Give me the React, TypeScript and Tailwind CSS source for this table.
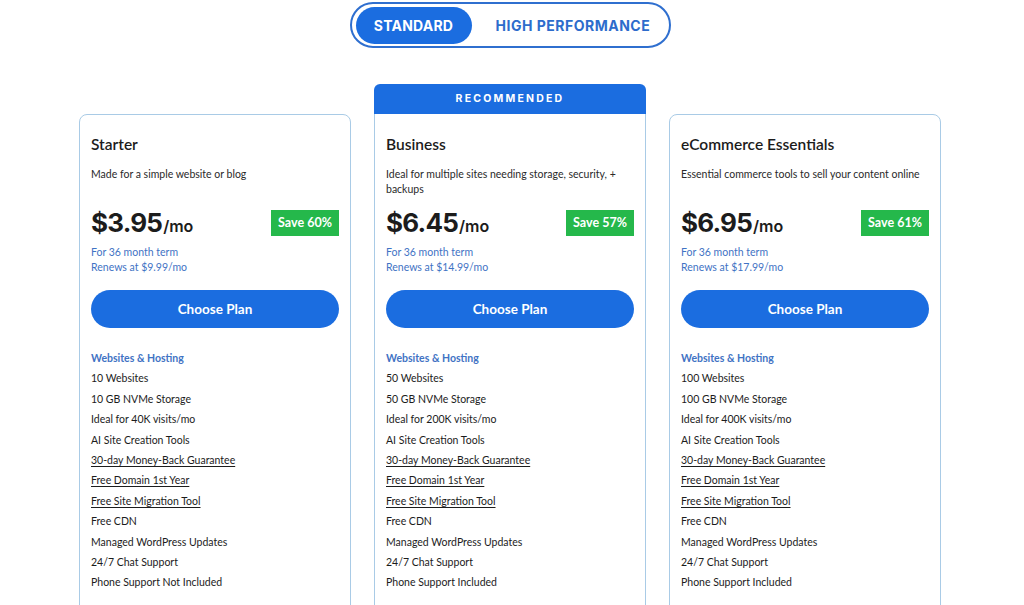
import React from 'react';

type Plan = {
  name: string;
  blurb: string;
  price: string;
  save: string;
  renews: string;
  recommended?: boolean;
  features: { text: string; link?: boolean }[];
};

const common = (sites: string, storage: string, visits: string, phone: string) => [
  { text: sites },
  { text: storage },
  { text: visits },
  { text: 'AI Site Creation Tools' },
  { text: '30-day Money-Back Guarantee', link: true },
  { text: 'Free Domain 1st Year', link: true },
  { text: 'Free Site Migration Tool', link: true },
  { text: 'Free CDN' },
  { text: 'Managed WordPress Updates' },
  { text: '24/7 Chat Support' },
  { text: phone },
];

const plans: Plan[] = [
  {
    name: 'Starter',
    blurb: 'Made for a simple website or blog',
    price: '$3.95',
    save: 'Save 60%',
    renews: 'Renews at $9.99/mo',
    features: common('10 Websites', '10 GB NVMe Storage', 'Ideal for 40K visits/mo', 'Phone Support Not Included'),
  },
  {
    name: 'Business',
    blurb: 'Ideal for multiple sites needing storage, security, + backups',
    price: '$6.45',
    save: 'Save 57%',
    renews: 'Renews at $14.99/mo',
    recommended: true,
    features: common('50 Websites', '50 GB NVMe Storage', 'Ideal for 200K visits/mo', 'Phone Support Included'),
  },
  {
    name: 'eCommerce Essentials',
    blurb: 'Essential commerce tools to sell your content online',
    price: '$6.95',
    save: 'Save 61%',
    renews: 'Renews at $17.99/mo',
    features: common('100 Websites', '100 GB NVMe Storage', 'Ideal for 400K visits/mo', 'Phone Support Included'),
  },
];

export default function App() {
  return (
    <div className="h-[605px] w-[1024px] overflow-hidden bg-white font-['Lato',sans-serif] text-[#1c1c1c]">
      <div className="w-[1020px]">
        <div className="flex justify-center pt-[2px]">
          <div className="flex h-[46px] w-[321px] items-center rounded-full border-2 border-[#2f6fcf] px-[4px] font-['Inter',sans-serif]">
            <div className="flex h-[37px] w-[116px] items-center justify-center rounded-full bg-[#1b6de0] text-[14px] font-bold tracking-[0.2px] text-white">
              STANDARD
            </div>
            <div className="flex-1 pl-[24px] text-[14px] font-bold tracking-[0.5px] text-[#2d6ccc]">HIGH PERFORMANCE</div>
          </div>
        </div>

        <div className="mt-[36px] flex justify-center gap-[23px]">
          {plans.map((p) => (
            <PlanCard key={p.name} plan={p} />
          ))}
        </div>
      </div>
    </div>
  );
}

function PlanCard({ plan }: { plan: Plan }) {
  return (
    <div className="w-[272px]">
      {plan.recommended ? (
        <div className="flex h-[30px] items-center justify-center rounded-t-[6px] bg-[#1b6de0] font-['Inter',sans-serif] text-[10.5px] font-bold tracking-[2.2px] text-white">
          RECOMMENDED
        </div>
      ) : (
        <div className="h-[30px]" />
      )}
      <div
        className={`h-[520px] border border-[#a9cbe6] px-[11px] ${plan.recommended ? 'border-t-0 pt-[21px]' : 'rounded-[8px] pt-[20px]'}`}
      >
        <h3 className="text-[15.5px] leading-[18px] font-semibold">{plan.name}</h3>
        <p className="mt-[14px] h-[36px] text-[10.5px] leading-[15px] text-[#2a2a2a]">{plan.blurb}</p>

        <div className="mt-[4px] flex items-center justify-between">
          <div className="flex items-baseline font-['Inter',sans-serif]">
            <span className="text-[26px] leading-[32px] font-bold tracking-[-0.8px]">{plan.price}</span>
            <span className="ml-[1px] text-[16px] font-semibold">/mo</span>
          </div>
          <span className="flex h-[26px] w-[68px] items-center justify-center bg-[#25b84b] text-[12.5px] font-bold text-white">
            {plan.save}
          </span>
        </div>

        <div className="mt-[6px] text-[10.5px] leading-[15px] text-[#3f73c4]">
          <div>For 36 month term</div>
          <div>{plan.renews}</div>
        </div>

        <button className="mt-[15px] h-[38px] w-full rounded-full bg-[#1b6de0] text-[13.5px] font-bold text-white">Choose Plan</button>

        <div className="mt-[20px] text-[10.5px] leading-[20.4px]">
          <div className="font-bold text-[#3f73c4]">Websites &amp; Hosting</div>
          {plan.features.map((f) => (
            <div key={f.text} className={f.link ? 'underline underline-offset-2' : ''}>
              {f.text}
            </div>
          ))}
        </div>
      </div>
    </div>
  );
}
